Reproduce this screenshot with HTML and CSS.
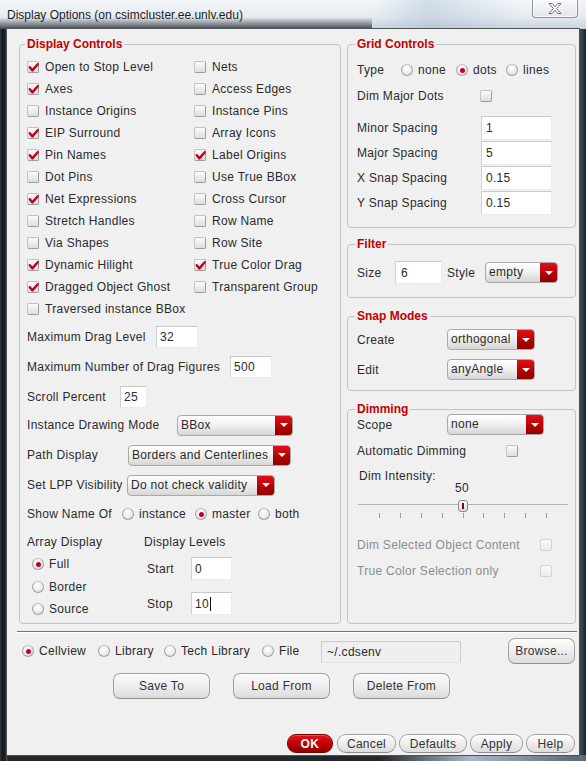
FILE: index.html
```html
<!DOCTYPE html>
<html lang="en">
<head>
<meta charset="utf-8">
<title>Display Options</title>
<link rel="stylesheet" href="styles.css">
</head>
<body>
<div class="window">
  <div class="titlebar">
    <span class="title">Display Options (on csimcluster.ee.unlv.edu)</span>
    <span class="close"><svg width="14" height="11" viewBox="0 0 14 11"><path d="M1 0.5 H4.2 L7 3.7 L9.8 0.5 H13 L8.6 5.5 L13 10.5 H9.8 L7 7.3 L4.2 10.5 H1 L5.4 5.5 Z" fill="#fdfdfd" stroke="#6d747b" stroke-width="1"/></svg></span>
  </div>
  <div class="client">
    <div class="columns">
      <section class="group display-group">
        <div class="group-title">Display Controls</div>
        <div class="check-grid">
          <div class="check"><span class="cb on"><svg viewBox="0 0 10 10"><path d="M1.6 4.8 L4 7.6 L8.8 2"/></svg></span>Open to Stop Level</div>
          <div class="check"><span class="cb"></span>Nets</div>
          <div class="check"><span class="cb on"><svg viewBox="0 0 10 10"><path d="M1.6 4.8 L4 7.6 L8.8 2"/></svg></span>Axes</div>
          <div class="check"><span class="cb"></span>Access Edges</div>
          <div class="check"><span class="cb"></span>Instance Origins</div>
          <div class="check"><span class="cb"></span>Instance Pins</div>
          <div class="check"><span class="cb on"><svg viewBox="0 0 10 10"><path d="M1.6 4.8 L4 7.6 L8.8 2"/></svg></span>EIP Surround</div>
          <div class="check"><span class="cb"></span>Array Icons</div>
          <div class="check"><span class="cb on"><svg viewBox="0 0 10 10"><path d="M1.6 4.8 L4 7.6 L8.8 2"/></svg></span>Pin Names</div>
          <div class="check"><span class="cb on"><svg viewBox="0 0 10 10"><path d="M1.6 4.8 L4 7.6 L8.8 2"/></svg></span>Label Origins</div>
          <div class="check"><span class="cb"></span>Dot Pins</div>
          <div class="check"><span class="cb"></span>Use True BBox</div>
          <div class="check"><span class="cb on"><svg viewBox="0 0 10 10"><path d="M1.6 4.8 L4 7.6 L8.8 2"/></svg></span>Net Expressions</div>
          <div class="check"><span class="cb"></span>Cross Cursor</div>
          <div class="check"><span class="cb"></span>Stretch Handles</div>
          <div class="check"><span class="cb"></span>Row Name</div>
          <div class="check"><span class="cb"></span>Via Shapes</div>
          <div class="check"><span class="cb"></span>Row Site</div>
          <div class="check"><span class="cb on"><svg viewBox="0 0 10 10"><path d="M1.6 4.8 L4 7.6 L8.8 2"/></svg></span>Dynamic Hilight</div>
          <div class="check"><span class="cb on"><svg viewBox="0 0 10 10"><path d="M1.6 4.8 L4 7.6 L8.8 2"/></svg></span>True Color Drag</div>
          <div class="check"><span class="cb on"><svg viewBox="0 0 10 10"><path d="M1.6 4.8 L4 7.6 L8.8 2"/></svg></span>Dragged Object Ghost</div>
          <div class="check"><span class="cb"></span>Transparent Group</div>
          <div class="check"><span class="cb"></span>Traversed instance BBox</div>
        </div>

        <div class="form-row row-drag"><span class="lbl w129">Maximum Drag Level</span><span class="tf tf-drag">32</span></div>
        <div class="form-row row-std"><span class="lbl w203">Maximum Number of Drag Figures</span><span class="tf tf-drag">500</span></div>
        <div class="form-row row-std"><span class="lbl w93">Scroll Percent</span><span class="tf tf-scroll">25</span></div>
        <div class="form-row row-dd1"><span class="lbl w150">Instance Drawing Mode</span><span class="dd dd-inst"><span class="dd-text">BBox</span><span class="dd-arrow"><i></i></span></span></div>
        <div class="form-row row-std"><span class="lbl w101">Path Display</span><span class="dd dd-path"><span class="dd-text">Borders and Centerlines</span><span class="dd-arrow"><i></i></span></span></div>
        <div class="form-row row-std"><span class="lbl w100">Set LPP Visibility</span><span class="dd dd-lpp"><span class="dd-text">Do not check validity</span><span class="dd-arrow"><i></i></span></span></div>
        <div class="form-row row-show">
          <span class="lbl w95">Show Name Of</span>
          <span class="radio w73"><span class="rb"></span>instance</span>
          <span class="radio w63"><span class="rb on"></span>master</span>
          <span class="radio"><span class="rb"></span>both</span>
        </div>

        <div class="array-block">
          <div class="array-col">
            <div class="sub-head">Array Display</div>
            <div class="radio array-radio"><span class="rb on"></span>Full</div>
            <div class="radio array-radio"><span class="rb"></span>Border</div>
            <div class="radio array-radio"><span class="rb"></span>Source</div>
          </div>
          <div class="levels-col">
            <div class="sub-head">Display Levels</div>
            <div class="level-row level-start"><span class="lbl w44">Start</span><span class="tf tf-level">0</span></div>
            <div class="level-row level-stop"><span class="lbl w44">Stop</span><span class="tf tf-level">10<span class="caret"></span></span></div>
          </div>
        </div>
      </section>

      <div class="right-col">
        <section class="group grid-group">
          <div class="group-title">Grid Controls</div>
          <div class="form-row grid-type">
            <span class="lbl w44">Type</span>
            <span class="radio w55"><span class="rb"></span>none</span>
            <span class="radio w50"><span class="rb on"></span>dots</span>
            <span class="radio"><span class="rb"></span>lines</span>
          </div>
          <div class="form-row dim-major"><span class="lbl w123">Dim Major Dots</span><span class="cb"></span></div>
          <div class="form-row spacing first"><span class="lbl w124">Minor Spacing</span><span class="tf tf-space">1</span></div>
          <div class="form-row spacing"><span class="lbl w124">Major Spacing</span><span class="tf tf-space">5</span></div>
          <div class="form-row spacing"><span class="lbl w124">X Snap Spacing</span><span class="tf tf-space">0.15</span></div>
          <div class="form-row spacing"><span class="lbl w124">Y Snap Spacing</span><span class="tf tf-space">0.15</span></div>
        </section>

        <section class="group filter-group">
          <div class="group-title">Filter</div>
          <div class="form-row filter-row">
            <span class="lbl w38">Size</span><span class="tf tf-size">6</span>
            <span class="lbl w38 style-lbl">Style</span><span class="dd dd-style"><span class="dd-text">empty</span><span class="dd-arrow"><i></i></span></span>
          </div>
        </section>

        <section class="group snap-group">
          <div class="group-title">Snap Modes</div>
          <div class="form-row snap-row first"><span class="lbl w90">Create</span><span class="dd dd-snap"><span class="dd-text">orthogonal</span><span class="dd-arrow"><i></i></span></span></div>
          <div class="form-row snap-row"><span class="lbl w90">Edit</span><span class="dd dd-snap"><span class="dd-text">anyAngle</span><span class="dd-arrow"><i></i></span></span></div>
        </section>

        <section class="group dim-group">
          <div class="group-title">Dimming</div>
          <div class="form-row scope-row"><span class="lbl w90">Scope</span><span class="dd dd-scope"><span class="dd-text">none</span><span class="dd-arrow"><i></i></span></span></div>
          <div class="form-row auto-row"><span class="lbl w149">Automatic Dimming</span><span class="cb"></span></div>
          <div class="intensity-lbl">Dim Intensity:</div>
          <div class="slider-val">50</div>
          <div class="slider">
            <div class="track"></div>
            <div class="handle"><i></i></div>
            <div class="ticks"><i></i><i></i><i></i><i></i><i></i><i></i><i></i><i></i><i></i></div>
          </div>
          <div class="form-row dis-row first"><span class="lbl w183">Dim Selected Object Content</span><span class="cb dis"></span></div>
          <div class="form-row dis-row"><span class="lbl w183">True Color Selection only</span><span class="cb dis"></span></div>
        </section>
      </div>
    </div>

    <div class="separator"></div>

    <div class="source-row">
      <span class="radio w76"><span class="rb on"></span>Cellview</span>
      <span class="radio w66"><span class="rb"></span>Library</span>
      <span class="radio w98"><span class="rb"></span>Tech Library</span>
      <span class="radio w59"><span class="rb"></span>File</span>
      <span class="tf tf-file">~/.cdsenv</span>
      <span class="btn btn-browse">Browse...</span>
    </div>

    <div class="action-row">
      <span class="btn btn-action">Save To</span>
      <span class="btn btn-action">Load From</span>
      <span class="btn btn-action">Delete From</span>
    </div>

    <div class="dialog-row">
      <span class="btn pill ok">OK</span>
      <span class="btn pill w59">Cancel</span>
      <span class="btn pill w68">Defaults</span>
      <span class="btn pill w53">Apply</span>
      <span class="btn pill w49">Help</span>
    </div>
  </div>
</div>
</body>
</html>
```

FILE: styles.css
```css
* { box-sizing: border-box; }
html, body { margin: 0; padding: 0; }
body {
  width: 586px;
  height: 761px;
  overflow: hidden;
  font-family: "Liberation Sans", Arial, sans-serif;
  font-size: 12px;
  letter-spacing: 0.3px;
  color: #2b2b2b;
  background: #24292d;
}

.window {
  width: 586px;
  height: 761px;
  display: flex;
  flex-direction: column;
  background:
    linear-gradient(to right, rgba(0,0,0,0) 0, rgba(0,0,0,0) 380px, rgba(190,210,228,.85) 470px, rgba(120,140,160,.6) 586px) 0 100% / 586px 6px no-repeat,
    linear-gradient(to right, #3a4044 0, #15191c 2px, #1d2226 5px, #4a4f53 7px, #22272b 8px, #22272b 578px, #3c4a58 581px, #1c2024 586px);
}

/* title bar */
.titlebar {
  height: 29px;
  flex: none;
  display: flex;
  align-items: flex-start;
  background:
    linear-gradient(to bottom, rgba(40,44,48,0) 0, rgba(40,44,48,0) 60%, rgba(40,44,48,.55) 88%, rgba(30,32,36,.8) 100%) 0 0 / 372px 100% no-repeat,
    linear-gradient(to right, rgba(0,0,0,0) 0, rgba(0,0,0,0) 372px, rgba(150,175,200,.35) 430px, rgba(0,0,0,0) 520px),
    linear-gradient(to bottom, #f4f7fa 0, #e4eaf0 60%, #c9d3dc 100%);
}
.title {
  margin: 8px 0 0 7px;
  line-height: 14px;
  font-size: 12px;
  letter-spacing: 0;
  color: #1c1c1c;
}
.close {
  margin-left: auto;
  margin-right: 8px;
  width: 46px;
  height: 18px;
  border: 1px solid #8b96a1;
  border-top: none;
  border-radius: 0 0 4px 4px;
  background: linear-gradient(#f7f9fb, #e3e8ed);
  display: flex;
  align-items: center;
  justify-content: center;
  box-shadow: inset 0 0 0 1px rgba(255,255,255,.7);
}

/* client area */
.client {
  flex: 1;
  margin: 0 7px 6px 7px;
  background: #f0f0f0;
  display: flex;
  flex-direction: column;
  box-shadow: 0 0 0 1px #4c5256;
}

.columns {
  display: flex;
  gap: 6px;
  height: 580px;
  margin: 15px 3px 0 12px;
}

.group {
  border: 1px solid #c4c4c4;
  border-radius: 4px;
}
.group-title {
  width: max-content;
  height: 14px;
  line-height: 14px;
  margin: -8px 0 0 -2px;
  padding: 0 2px;
  background: #f0f0f0;
  color: #c00000;
  font-weight: bold;
  letter-spacing: 0;
}

/* display controls */
.display-group { width: 322px; flex: none; padding-left: 7px; }

.check-grid {
  display: grid;
  grid-template-columns: 167px 1fr;
  grid-auto-rows: 22px;
  margin-top: 5px;
}
.check { display: flex; align-items: center; white-space: nowrap; }

.cb {
  flex: none;
  width: 12px;
  height: 12px;
  margin-right: 6px;
  border: 1px solid #9c9c9c;
  border-top-color: #c2c2c2;
  border-left-color: #c2c2c2;
  border-radius: 2px;
  background: linear-gradient(#fbfbfb, #dedede);
  display: flex;
  align-items: center;
  justify-content: center;
}
.cb svg { width: 11px; height: 11px; overflow: visible; }
.cb svg path { fill: none; stroke: #c5001c; stroke-width: 2.2; stroke-linecap: round; stroke-linejoin: round; }
.cb.dis { border-color: #d4d4d4; background: linear-gradient(#f8f8f8, #ececec); }

.form-row { display: flex; align-items: center; white-space: nowrap; }
.lbl { flex: none; }
.w38 { width: 38px; } .w44 { width: 44px; } .w90 { width: 90px; } .w93 { width: 93px; }
.w95 { width: 95px; } .w100 { width: 100px; } .w101 { width: 101px; } .w123 { width: 123px; }
.w124 { width: 124px; } .w129 { width: 129px; } .w149 { width: 149px; } .w150 { width: 150px; }
.w183 { width: 183px; } .w203 { width: 203px; }
.w49 { width: 49px; } .w50 { width: 50px; } .w53 { width: 53px; } .w55 { width: 55px; }
.w59 { width: 59px; } .w63 { width: 63px; } .w66 { width: 66px; } .w68 { width: 68px; }
.w73 { width: 73px; } .w76 { width: 76px; } .w98 { width: 98px; }

.row-drag { height: 22px; margin-top: 6px; }
.row-std { height: 22px; margin-top: 8px; }
.row-dd1 { height: 22px; margin-top: 6px; }
.row-show { height: 20px; margin-top: 8px; }

.tf {
  flex: none;
  display: flex;
  align-items: center;
  padding-left: 3px;
  background: #fff;
  border: 1px solid #ececec;
  border-top-color: #c9c9c9;
  border-left-color: #d2d2d2;
  color: #2b2b2b;
}
.tf-drag { width: 42px; height: 22px; }
.tf-scroll { width: 27px; height: 22px; }
.tf-level { width: 41px; height: 23px; }
.tf-space { width: 71px; height: 24px; padding-left: 4px; }
.tf-size { width: 47px; height: 23px; padding-left: 5px; }
.caret { display: inline-block; width: 1px; height: 14px; background: #111; margin-left: 1px; }

.dd {
  flex: none;
  display: flex;
  height: 21px;
  border: 1px solid #a9a9a9;
  border-radius: 4px;
  background: linear-gradient(#ffffff 0, #f1f1f1 45%, #d6d6d6 100%);
  overflow: hidden;
}
.dd-text { flex: 1; padding: 1px 0 0 3px; line-height: 16px; color: #2b2b2b; }
.dd-arrow {
  width: 17px;
  flex: none;
  background: linear-gradient(#e31017, #b10000 60%, #8e0000);
  display: flex;
  align-items: center;
  justify-content: center;
}
.dd-arrow i {
  width: 0; height: 0;
  border-left: 4px solid transparent;
  border-right: 4px solid transparent;
  border-top: 4px solid #fff;
}
.dd-inst { width: 116px; }
.dd-path { width: 163px; }
.dd-lpp { width: 148px; }
.dd-style { width: 73px; }
.dd-snap { width: 88px; }
.dd-scope { width: 97px; }

.radio { display: flex; align-items: center; flex: none; white-space: nowrap; }
.rb {
  flex: none;
  width: 12px;
  height: 12px;
  margin-right: 5px;
  border-radius: 50%;
  border: 1px solid #a3a3a3;
  border-top-color: #bdbdbd;
  background: radial-gradient(circle at 45% 35%, #ffffff 0, #f2f2f2 40%, #d2d2d2 100%);
  display: flex;
  align-items: center;
  justify-content: center;
}
.rb.on::after {
  content: "";
  width: 5px;
  height: 5px;
  border-radius: 50%;
  background: #c4001a;
}

/* array display / display levels */
.array-block { display: flex; margin-top: 9px; }
.array-col { width: 117px; flex: none; }
.sub-head { height: 18px; line-height: 18px; }
.array-radio { height: 22.5px; padding-left: 5px; }
.array-col .sub-head { margin-bottom: 2px; }
.levels-col { flex: 1; }
.level-row { display: flex; align-items: center; padding-left: 3px; }
.level-start { margin-top: 6px; }
.level-stop { margin-top: 12px; }

/* right column */
.right-col { width: 229px; flex: none; display: flex; flex-direction: column; }
.right-col .group { padding-left: 9px; }
.grid-group { height: 184px; }
.filter-group { height: 54px; margin-top: 16px; }
.snap-group { height: 75px; margin-top: 18px; }
.dim-group { flex: 1; margin-top: 18px; }

.grid-type { height: 20px; margin-top: 9px; }
.dim-major { height: 20px; margin-top: 6px; }
.spacing { height: 24px; margin-top: 1px; }
.spacing.first { margin-top: 10px; }

.filter-row { height: 23px; margin-top: 10px; }
.style-lbl { margin-left: 5px; }

.snap-row { height: 21px; margin-top: 9px; }
.snap-row.first { margin-top: 6px; }

.scope-row { height: 21px; margin-top: -2px; }
.auto-row { height: 20px; margin-top: 6px; }
.intensity-lbl { height: 12px; line-height: 12px; margin: 9px 0 0 2px; }
.slider-val { width: 208px; height: 12px; line-height: 12px; margin-left: 1px; text-align: center; }
.slider { position: relative; width: 210px; height: 24px; margin: 2px 0 0 1px; padding-top: 8px; }
.track { height: 1px; background: #b3b3b3; }
.handle {
  position: absolute;
  left: 100px;
  top: 4px;
  width: 10px;
  height: 12px;
  border: 1px solid #8c8c8c;
  border-radius: 3px;
  background: linear-gradient(#fdfdfd, #d9d9d9);
  display: flex;
  justify-content: center;
  align-items: center;
}
.handle i { width: 2px; height: 6px; background: #8a0010; }
.ticks { display: flex; justify-content: space-between; margin: 8px 21px 0 21px; }
.ticks i { width: 1px; height: 5px; background: #9a9a9a; }

.dis-row { height: 20px; color: #8d8d8d; }
.dis-row.first { margin-top: 15px; }
.dis-row + .dis-row { margin-top: 6px; }

/* bottom area */
.separator {
  height: 2px;
  margin: 7px 2px 0 10px;
  border-top: 1px solid #727272;
  border-bottom: 1px solid #ffffff;
}
.source-row {
  display: flex;
  align-items: center;
  height: 26px;
  margin-top: 5px;
  padding: 0 4px 0 15px;
}
.tf-file {
  width: 140px;
  height: 22px;
  margin-top: 1px;
  padding-left: 5px;
  background: #efefef;
  border: 1px solid #cdcdcd;
  border-bottom-color: #e4e4e4;
}
.btn {
  flex: none;
  display: flex;
  align-items: center;
  justify-content: center;
  border: 1px solid #a2a2a2;
  border-bottom-color: #8e8e8e;
  border-radius: 7px;
  background: linear-gradient(#fcfcfc 0, #efefef 45%, #dcdcdc 100%);
  box-shadow: inset 0 1px 0 #ffffff;
  color: #333;
  white-space: nowrap;
}
.btn-browse { margin-left: auto; width: 67px; height: 26px; }
.action-row {
  display: flex;
  gap: 23px;
  height: 26px;
  margin-top: 9px;
  padding-left: 106px;
}
.btn-action { width: 97px; height: 26px; }
.dialog-row {
  display: flex;
  justify-content: flex-end;
  gap: 3px;
  height: 19px;
  margin-top: auto;
  margin-bottom: 2px;
  padding-right: 4px;
}
.pill { height: 19px; border-radius: 9px; }
.ok {
  width: 46px;
  margin-right: 1px;
  border-color: #7c0000;
  background: linear-gradient(#e5121a 0, #c20000 50%, #8f0000 100%);
  box-shadow: inset 0 1px 0 rgba(255,255,255,.25);
  color: #fff;
  font-weight: bold;
  letter-spacing: 0.5px;
}
```
